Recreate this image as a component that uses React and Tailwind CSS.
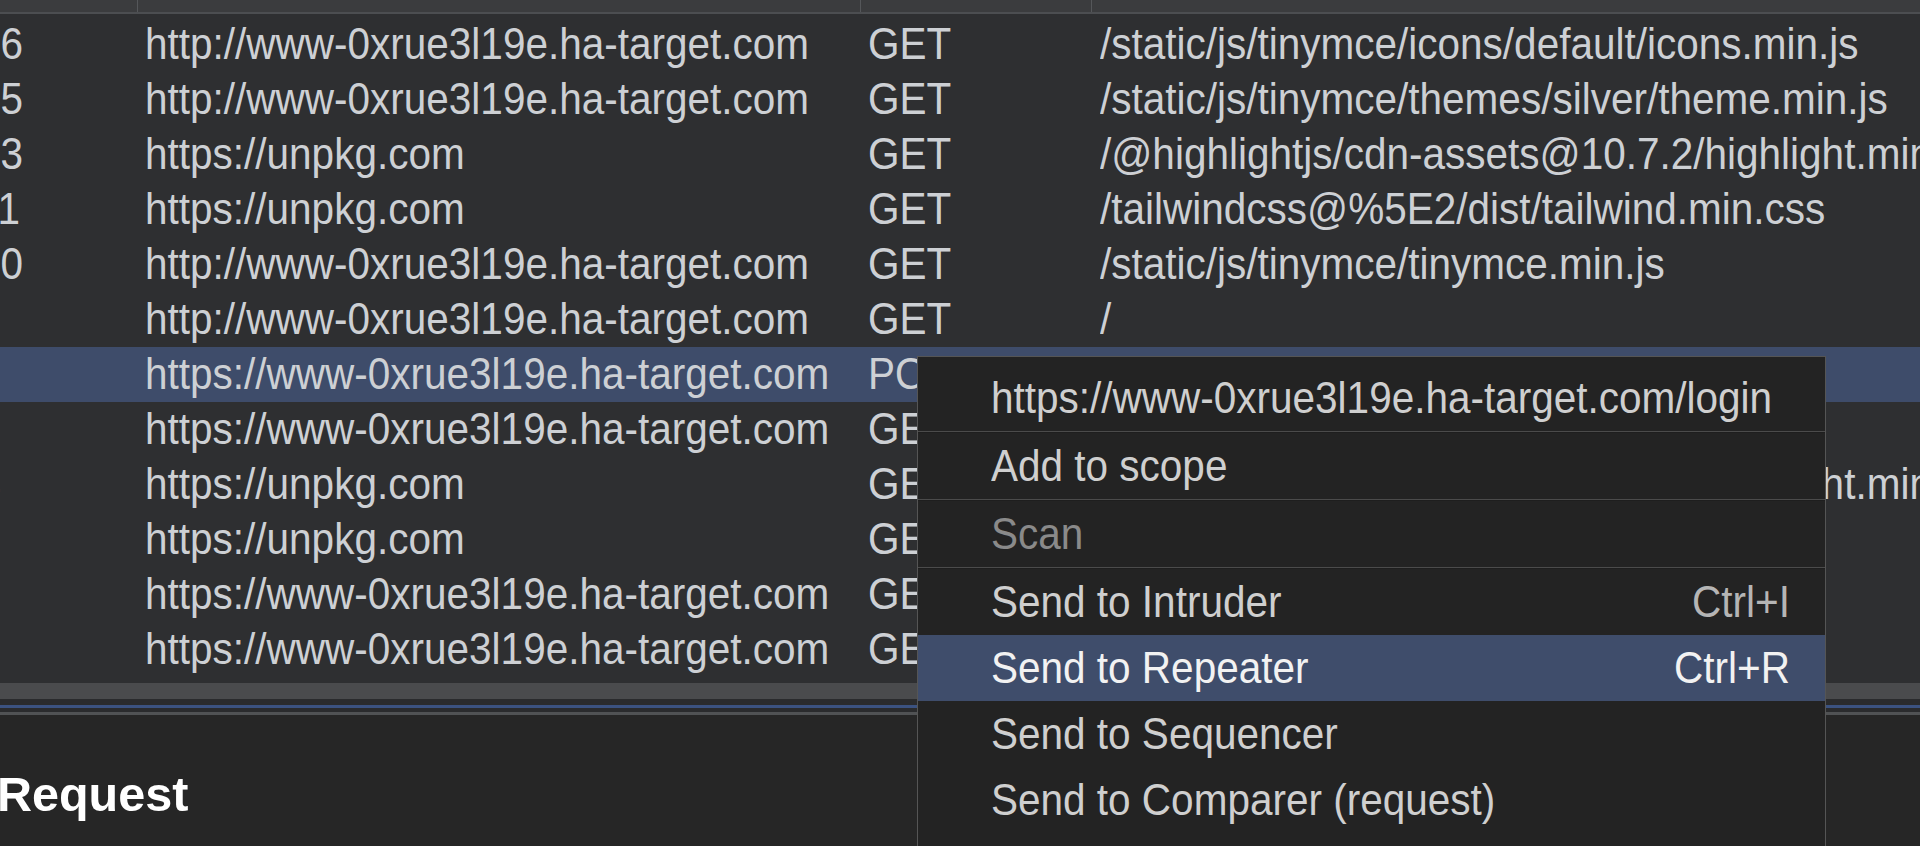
import React from "react";

const HOST_HTTP = "http://www-0xrue3l19e.ha-target.com";
const HOST_HTTPS = "https://www-0xrue3l19e.ha-target.com";
const UNPKG = "https://unpkg.com";

const rows = [
  { n: "16", host: HOST_HTTP, m: "GET", p: "/static/js/tinymce/icons/default/icons.min.js" },
  { n: "15", host: HOST_HTTP, m: "GET", p: "/static/js/tinymce/themes/silver/theme.min.js" },
  { n: "13", host: UNPKG, m: "GET", p: "/@highlightjs/cdn-assets@10.7.2/highlight.min.js" },
  { n: "11", host: UNPKG, m: "GET", p: "/tailwindcss@%5E2/dist/tailwind.min.css" },
  { n: "10", host: HOST_HTTP, m: "GET", p: "/static/js/tinymce/tinymce.min.js" },
  { n: "9", host: HOST_HTTP, m: "GET", p: "/" },
  { n: "8", host: HOST_HTTPS, m: "POST", p: "/login", sel: true },
  { n: "7", host: HOST_HTTPS, m: "GET", p: "/" },
  { n: "4", host: UNPKG, m: "GET", p: "/@highlightjs/cdn-assets@10.7.2/highlight.min.js" },
  { n: "2", host: UNPKG, m: "GET", p: "/tailwindcss@%5E2/dist/tailwind.min.css" },
  { n: "1", host: HOST_HTTPS, m: "GET", p: "/static/js/tinymce/tinymce.min.js" },
  { n: "0", host: HOST_HTTPS, m: "GET", p: "/favicon.ico" },
];

function T({ children, className = "" }) {
  return (
    <span className={"inline-block scale-y-110 whitespace-nowrap " + className}>{children}</span>
  );
}

function Row({ r }) {
  return (
    <div
      className={
        "flex h-[55px] items-center text-[40.5px] leading-none text-[#cdd0d4] " +
        (r.sel ? "bg-[#3e4c6a]" : "")
      }
    >
      <div className="w-[138px] shrink-0">
        <T className="ml-[-22px]">{r.n}</T>
      </div>
      <div className="w-[723px] shrink-0 pl-[7px]">
        <T>{r.host}</T>
      </div>
      <div className="w-[231px] shrink-0 pl-[7px]">
        <T>{r.m}</T>
      </div>
      <div className="shrink-0 pl-[8px]">
        <T>{r.p}</T>
      </div>
    </div>
  );
}

function MenuItem({ label, shortcut, disabled, active }) {
  return (
    <div
      className={
        "flex h-[66px] items-center justify-between pl-[73px] pr-[35px] text-[40.5px] leading-none " +
        (active
          ? "bg-[#3f4d6b] text-[#f2f2f2]"
          : disabled
          ? "text-[#8a8a8a]"
          : "text-[#cfcfcf]")
      }
    >
      <T>{label}</T>
      {shortcut ? (
        <T className={active ? "text-[#f2f2f2]" : "text-[#b5b5b5]"}>{shortcut}</T>
      ) : null}
    </div>
  );
}

function Sep() {
  return <div className="h-[2px] border-t border-[#4b4b4b] bg-[#1e1e1e]" />;
}

export default function App() {
  return (
    <div
      className="relative h-[846px] w-[1920px] overflow-hidden bg-[#262626]"
      style={{ fontFamily: '"Liberation Sans", Arial, sans-serif' }}
    >
      {/* Table */}
      <div className="flex flex-col bg-[#2e2f31]">
        <div className="flex h-[12px] bg-[#3b3c3e]">
          <div className="w-[137px] shrink-0" />
          <div className="w-px shrink-0 bg-[#55575a]" />
          <div className="w-[722px] shrink-0" />
          <div className="w-px shrink-0 bg-[#55575a]" />
          <div className="w-[230px] shrink-0" />
          <div className="w-px shrink-0 bg-[#55575a]" />
          <div className="flex-1" />
        </div>
        <div className="h-[2px] bg-[#4c4e51]" />
        <div className="flex flex-col pt-[3px]">
          {rows.map((r, i) => (
            <Row key={i} r={r} />
          ))}
        </div>
        <div className="h-[6px]" />
        {/* horizontal scrollbar */}
        <div className="h-[16px] bg-[#4a4b4d]" />
        <div className="h-[6px] bg-[#2a2b2d]" />
        <div className="h-[3px] bg-[#3b5280]" />
        <div className="h-[4px] bg-[#2a2b2d]" />
        <div className="h-[3px] bg-[#505254]" />
      </div>

      {/* Bottom panel */}
      <div className="pt-[55px]">
        <span className="ml-[-3px] inline-block text-[48.5px] font-bold leading-none text-white">
          Request
        </span>
      </div>

      {/* Context menu */}
      <div className="absolute left-[917px] top-[356px] w-[909px] border border-[#555555] bg-[#232323] pt-[8px]">
        <MenuItem label="https://www-0xrue3l19e.ha-target.com/login" />
        <Sep />
        <MenuItem label="Add to scope" />
        <Sep />
        <MenuItem label="Scan" disabled />
        <Sep />
        <MenuItem label="Send to Intruder" shortcut="Ctrl+I" />
        <MenuItem label="Send to Repeater" shortcut="Ctrl+R" active />
        <MenuItem label="Send to Sequencer" />
        <MenuItem label="Send to Comparer (request)" />
        <MenuItem label="Send to Comparer (response)" />
      </div>
    </div>
  );
}
